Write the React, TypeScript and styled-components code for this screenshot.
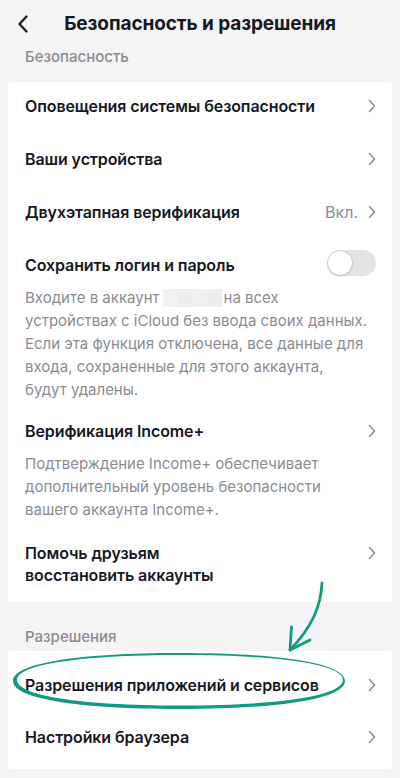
import styled, { createGlobalStyle } from 'styled-components';

const GlobalStyle = createGlobalStyle`
  body {
    margin: 0;
    background: #f4f4f4;
    font-family: Inter, "Liberation Sans", sans-serif;
    color: #161823;
  }
`;

const Page = styled.div`
  position: relative;
  width: 400px;
  min-height: 778px;
  background: #f4f4f4;
  overflow: hidden;
`;

const Header = styled.header`
  position: relative;
  height: 46px;
  display: flex;
  align-items: center;
  justify-content: center;
`;

const BackButton = styled.button`
  position: absolute;
  left: 14px;
  top: 13px;
  width: 18px;
  height: 22px;
  padding: 0;
  border: none;
  background: none;
  display: flex;
  align-items: center;
  justify-content: center;
`;

const Title = styled.h1`
  margin: 0;
  font-size: 19px;
  font-weight: 700;
  letter-spacing: -0.1px;
`;

const SectionLabel = styled.div<{ $top: number; $bottom: number }>`
  padding: 0 25px;
  margin-top: ${({ $top }) => $top}px;
  margin-bottom: ${({ $bottom }) => $bottom}px;
  font-size: 15px;
  line-height: 20px;
  font-weight: 500;
  color: #8a8b91;
`;

const Card = styled.section<{ $pt: number; $pb: number }>`
  margin: 0 8px;
  background: #fff;
  border-radius: 4px;
  padding: ${({ $pt, $pb }) => `${$pt}px 0 ${$pb}px`};
`;

const Item = styled.div<{ $pb?: number }>`
  padding: 13px 16px ${({ $pb }) => $pb ?? 18}px 17px;
`;

const ItemRow = styled.div<{ $top?: boolean }>`
  display: flex;
  align-items: ${({ $top }) => ($top ? 'flex-start' : 'center')};
  gap: 8px;
`;

const ItemTitle = styled.div`
  flex: 1;
  font-size: 16px;
  line-height: 22px;
  font-weight: 600;
  letter-spacing: -0.1px;
`;

const Value = styled.span`
  font-size: 16px;
  color: #8a8b91;
  margin-right: 2px;
`;

const Description = styled.p`
  margin: 10px 0 0;
  padding-right: 4px;
  font-size: 15px;
  line-height: 23px;
  color: #8a8b91;
`;

// blurred account name
const Hidden = styled.span`
  display: inline-block;
  width: 59px;
  height: 18px;
  margin: 0 2px 0 3px;
  vertical-align: -4px;
  background:
    linear-gradient(90deg, #f1f1f1 0 24%, #ececec 24% 48%, #f0f0f0 48% 74%, #eeeeee 74% 100%);
`;

const Toggle = styled.div`
  position: relative;
  width: 49px;
  height: 26px;
  margin: -4px 0 0;
  border-radius: 13px;
  background: #e3e3e3;
  flex-shrink: 0;
`;

const Knob = styled.div`
  position: absolute;
  left: 1px;
  top: 1px;
  width: 24px;
  height: 24px;
  border-radius: 50%;
  background: #fff;
  box-shadow: 0 0 0 0.5px rgba(0, 0, 0, 0.12), 0 1px 3px rgba(0, 0, 0, 0.18);
`;

const ChevronWrap = styled.span<{ $offset?: number }>`
  display: flex;
  flex-shrink: 0;
  margin-top: ${({ $offset }) => $offset ?? 0}px;
`;

const Overlay = styled.svg`
  position: absolute;
  left: 0;
  top: 0;
  pointer-events: none;
`;

const Chevron = ({ offset }: { offset?: number }) => (
  <ChevronWrap $offset={offset}>
    <svg width="8" height="14" viewBox="0 0 8 14">
      <path d="M1.5 1.5 L6.5 7 L1.5 12.5" fill="none" stroke="#8a8b91" strokeWidth="1.5" strokeLinecap="round" strokeLinejoin="round" />
    </svg>
  </ChevronWrap>
);

export default function App() {
  return (
    <Page>
      <GlobalStyle />
      <Header>
        <BackButton aria-label="Назад">
          <svg width="12" height="18" viewBox="0 0 12 18">
            <path d="M9.5 1.5 L2.5 9 L9.5 16.5" fill="none" stroke="#161823" strokeWidth="2.2" strokeLinecap="round" strokeLinejoin="round" />
          </svg>
        </BackButton>
        <Title>Безопасность и разрешения</Title>
      </Header>

      <SectionLabel $top={1} $bottom={15}>Безопасность</SectionLabel>
      <Card $pt={0} $pb={0}>
        <Item>
          <ItemRow>
            <ItemTitle>Оповещения системы безопасности</ItemTitle>
            <Chevron />
          </ItemRow>
        </Item>
        <Item>
          <ItemRow>
            <ItemTitle>Ваши устройства</ItemTitle>
            <Chevron />
          </ItemRow>
        </Item>
        <Item>
          <ItemRow>
            <ItemTitle>Двухэтапная верификация</ItemTitle>
            <Value>Вкл.</Value>
            <Chevron />
          </ItemRow>
        </Item>
        <Item $pb={6}>
          <ItemRow>
            <ItemTitle>Сохранить логин и пароль</ItemTitle>
            <Toggle>
              <Knob />
            </Toggle>
          </ItemRow>
          <Description>
            Входите в аккаунт<Hidden />на всех устройствах с iCloud без ввода своих данных. Если эта функция
            отключена, все данные для входа, сохраненные для этого аккаунта,
            <br />
            будут удалены.
          </Description>
        </Item>
        <Item $pb={8}>
          <ItemRow>
            <ItemTitle>Верификация Income+</ItemTitle>
            <Chevron />
          </ItemRow>
          <Description>
            Подтверждение Income+ обеспечивает дополнительный уровень безопасности вашего аккаунта Income+.
          </Description>
        </Item>
        <Item $pb={16}>
          <ItemRow $top>
            <ItemTitle>
              Помочь друзьям
              <br />
              восстановить аккаунты
            </ItemTitle>
            <Chevron offset={4} />
          </ItemRow>
        </Item>
      </Card>

      <SectionLabel $top={25} $bottom={4}>Разрешения</SectionLabel>
      <Card $pt={10} $pb={4}>
        <Item $pb={17}>
          <ItemRow>
            <ItemTitle>Разрешения приложений и сервисов</ItemTitle>
            <Chevron />
          </ItemRow>
        </Item>
        <Item $pb={17}>
          <ItemRow>
            <ItemTitle>Настройки браузера</ItemTitle>
            <Chevron />
          </ItemRow>
        </Item>
      </Card>

      {/* hand-drawn annotation */}
      <Overlay width="400" height="778" viewBox="0 0 400 778">
        <path
          fillRule="evenodd"
          fill="#0f9b7e"
          d="M13 681 C13 663.6 76 653 179 653 C282 653 345 663.6 345 681 C345 698.4 282 709 179 709 C76 709 13 698.4 13 681 Z
             M17 680 C17 664.5 79 655 180 655 C281 655 343 664.5 343 680 C343 695.5 281 705.5 180 705.5 C79 705.5 17 695.5 17 680 Z"
        />
        <path d="M322 583 C321 605 313 626 290 650" fill="none" stroke="#0f9b7e" strokeWidth="2.8" strokeLinecap="round" />
        <path d="M291.5 627 L290 650 L310 640" fill="none" stroke="#0f9b7e" strokeWidth="2.8" strokeLinecap="round" strokeLinejoin="round" />
      </Overlay>
    </Page>
  );
}
